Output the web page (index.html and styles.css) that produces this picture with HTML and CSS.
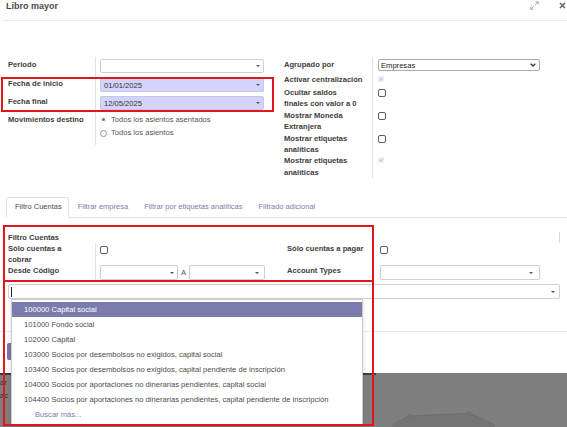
FILE: index.html
```html
<!DOCTYPE html>
<html lang="es">
<head>
    <meta charset="UTF-8">
    <title>Libro mayor</title>
    <link rel="stylesheet" href="styles.css">
</head>
<body>
<div class="page">
    <div class="modal">
        <div class="modal-header">
            <h4 class="modal-title">Libro mayor</h4>
            <div class="header-btns">
                <svg class="icon-expand" width="9" height="9" viewBox="0 0 9 9">
                    <path d="M5.2 3.8 L8.2 0.8 M5.6 0.8 H8.2 V3.4 M3.8 5.2 L0.8 8.2 M0.8 5.6 V8.2 H3.4" fill="none" stroke="#a5a5a5" stroke-width="1"/>
                </svg>
                <svg class="icon-close" width="7" height="7" viewBox="0 0 7 7">
                    <path d="M1 1 L6 6 M6 1 L1 6" stroke="#6e6e6e" stroke-width="1.7"/>
                </svg>
            </div>
        </div>

        <div class="modal-body">
            <div class="form-cols">
                <div class="group group-left">
                    <div class="frow r-first">
                        <div class="lbl">Periodo</div>
                        <div class="fld"><div class="input"><span></span><span class="caret"></span></div></div>
                    </div>
                    <div class="frow">
                        <div class="lbl">Fecha de inicio</div>
                        <div class="fld"><div class="input date"><span>01/01/2025</span><span class="caret"></span></div></div>
                    </div>
                    <div class="frow">
                        <div class="lbl">Fecha final</div>
                        <div class="fld"><div class="input date"><span>12/05/2025</span><span class="caret"></span></div></div>
                    </div>
                    <div class="frow r-radios">
                        <div class="lbl">Movimientos destino</div>
                        <div class="fld">
                            <div class="radio-row"><span class="radio checked"></span>Todos los asientos asentados</div>
                            <div class="radio-row"><span class="radio"></span>Todos los asientos</div>
                        </div>
                    </div>
                </div>

                <div class="group group-right">
                    <div class="frow r-select">
                        <div class="lbl">Agrupado por</div>
                        <div class="fld">
                            <div class="select"><span>Empresas</span>
                                <svg width="6" height="4" viewBox="0 0 6 4"><path d="M0.7 0.8 L3 3 L5.3 0.8" fill="none" stroke="#333" stroke-width="1.3"/></svg>
                            </div>
                        </div>
                    </div>
                    <div class="frow r-single">
                        <div class="lbl nowrap">Activar centralización</div>
                        <div class="fld"><span class="cb-dis"><svg width="4" height="4" viewBox="0 0 4 4"><path d="M0.6 2.2 L1.6 3.1 L3.4 0.9" fill="none" stroke="#9d9dba" stroke-width="0.8"/></svg></span></div>
                    </div>
                    <div class="frow r-double">
                        <div class="lbl">Ocultar saldos finales con valor a 0</div>
                        <div class="fld"><span class="cb"></span></div>
                    </div>
                    <div class="frow r-double">
                        <div class="lbl">Mostrar Moneda Extranjera</div>
                        <div class="fld"><span class="cb"></span></div>
                    </div>
                    <div class="frow r-double">
                        <div class="lbl">Mostrar etiquetas analíticas</div>
                        <div class="fld"><span class="cb"></span></div>
                    </div>
                    <div class="frow r-double">
                        <div class="lbl">Mostrar etiquetas analíticas</div>
                        <div class="fld"><span class="cb-dis"><svg width="4" height="4" viewBox="0 0 4 4"><path d="M0.6 2.2 L1.6 3.1 L3.4 0.9" fill="none" stroke="#9d9dba" stroke-width="0.8"/></svg></span></div>
                    </div>
                </div>
            </div>

            <div class="notebook">
                <ul class="nav-tabs">
                    <li><a class="tab active">Filtro Cuentas</a></li>
                    <li><a class="tab">Filtrar empresa</a></li>
                    <li><a class="tab">Filtrar por etiquetas analíticas</a></li>
                    <li><a class="tab">Filtrado adicional</a></li>
                </ul>
                <div class="tab-pane">
                    <div class="sep-title">Filtro Cuentas</div>
                    <div class="tab-grid">
                        <div class="lbl">Sólo cuentas a cobrar</div>
                        <div class="fld"><span class="cb"></span></div>
                        <div class="lbl">Sólo cuentas a pagar</div>
                        <div class="fld no-line"><span class="cb"></span></div>

                        <div class="lbl">Desde Código</div>
                        <div class="fld code-range">
                            <div class="input small"><span></span><span class="caret"></span></div>
                            <span class="range-a">A</span>
                            <div class="input small b"><span></span><span class="caret"></span></div>
                        </div>
                        <div class="lbl">Account Types</div>
                        <div class="fld no-line"><div class="input types"><span></span><span class="caret"></span></div></div>
                    </div>
                    <div class="input search"><span class="cursor"></span><span class="caret"></span></div>
                </div>
            </div>
        </div>

        <div class="modal-footer">
            <button class="btn-primary"></button>
        </div>
    </div>

    <div class="backdrop">
        <div class="behind-text">
            <div>ar</div>
            <div>ac</div>
        </div>
        <svg class="behind-chart" viewBox="0 0 555 52" width="555" height="52">
            <path d="M379.7 52 L397.3 41 L457.3 38.3 L483 50 L483 52 Z" fill="#747474"/>
            <polyline points="379.7,50 397.3,41 457.3,38.3 483,50" fill="none" stroke="#686868" stroke-width="0.8"/>
            <circle cx="397.3" cy="41" r="1.7" fill="#7a7a7a" stroke="#686868" stroke-width="0.7"/>
            <circle cx="457.3" cy="38.3" r="1.7" fill="#7a7a7a" stroke="#686868" stroke-width="0.7"/>
        </svg>
    </div>

    <ul class="dropdown">
        <li class="item active">100000 Capital social</li>
        <li class="item">101000 Fondo social</li>
        <li class="item">102000 Capital</li>
        <li class="item">103000 Socios por desembolsos no exigidos, capital social</li>
        <li class="item">103400 Socios por desembolsos no exigidos, capital pendiente de inscripción</li>
        <li class="item">104000 Socios por aportaciones no dinerarias pendientes, capital social</li>
        <li class="item">104400 Socios por aportaciones no dinerarias pendientes, capital pendiente de inscripción</li>
        <li class="item more">Buscar más...</li>
    </ul>

    <div class="mark mark-dates"></div>
    <div class="mark mark-filter"></div>
    <div class="mark mark-list"></div>
</div>
</body>
</html>
```

FILE: styles.css
```css
body {
    margin: 0;
    font-family: "Liberation Sans", Arial, sans-serif;
    font-size: 7.6px;
    color: #555;
    background-color: #fff;
}
.page {
    position: relative;
    width: 567px;
    height: 427px;
    overflow: hidden;
}

/* modal */
.modal {
    height: 373px;
    display: flex;
    flex-direction: column;
    background-color: #fff;
}
.modal-header {
    height: 20px;
    margin-left: 3px;
    border-bottom: 1px solid #ececec;
    display: flex;
    justify-content: space-between;
    align-items: flex-start;
}
.modal-title {
    margin: 0;
    padding: 0 0 0 3px;
    font-size: 9px;
    line-height: 12px;
    font-weight: bold;
    color: #4a4a4a;
}
.header-btns {
    display: flex;
    align-items: flex-start;
    gap: 20px;
    padding: 1px 1px 0 0;
}
.icon-close {
    margin-top: 1px;
}
.modal-body {
    flex: 1;
    padding: 36px 7px 0 8px;
}
.modal-footer {
    border-top: 1px solid #e9e9e9;
    padding: 11px 7px 13px;
}
.btn-primary {
    display: block;
    width: 60px;
    height: 17px;
    border: none;
    border-radius: 2px;
    background-color: #7776aa;
}

/* form */
.form-cols {
    display: flex;
    gap: 12px;
}
.group {
    display: flex;
    flex-direction: column;
}
.group-left {
    width: 264px;
}
.group-right {
    width: 260px;
}
.frow {
    display: grid;
    grid-template-columns: 87px 1fr;
}
.group-right .frow {
    grid-template-columns: 88px 1fr;
}
.lbl {
    font-weight: bold;
    color: #3e3e3e;
    line-height: 11.4px;
    padding: 2px 10px 0 0;
}
.nowrap {
    white-space: nowrap;
}
.fld {
    border-left: 1px solid #e3e3e3;
    padding: 2px 0 2px 4px;
}
.group-right .fld {
    padding-left: 5px;
}
.r-first .fld {
    padding-bottom: 3px;
}
.r-radios .fld {
    padding: 1px 0 5px 4px;
}
.r-select .fld {
    padding: 2px 0 2px 5px;
}
.r-single .lbl {
    padding-top: 1px;
}
.r-single .fld {
    height: 14px;
    box-sizing: border-box;
    padding-top: 3px;
}
.r-double .lbl {
    padding-top: 0;
}
.r-double .fld {
    padding-top: 2px;
}

.input {
    box-sizing: border-box;
    width: 164px;
    height: 14px;
    border: 1px solid #cfcfcf;
    border-radius: 2px;
    background-color: #fff;
    display: flex;
    align-items: center;
    justify-content: space-between;
    padding: 0 3px 0 3px;
    color: #333;
}
.input.date {
    background-color: #d3d3fc;
    border-color: #c6c6ee;
}
.caret {
    width: 0;
    height: 0;
    border-left: 2px solid transparent;
    border-right: 2px solid transparent;
    border-top: 2px solid #555;
}
.select {
    box-sizing: border-box;
    width: 162px;
    height: 12px;
    border: 1px solid #ababab;
    border-radius: 2px;
    display: flex;
    align-items: center;
    justify-content: space-between;
    padding: 0 3px 0 2px;
    color: #222;
}
.radio-row {
    display: flex;
    align-items: center;
    gap: 4px;
    line-height: 13.4px;
    color: #555;
}
.radio {
    box-sizing: border-box;
    width: 7px;
    height: 7px;
    border: 1px solid #9a9a9a;
    border-radius: 50%;
    display: flex;
    align-items: center;
    justify-content: center;
}
.radio.checked {
    border-color: #e6e6e6;
}
.radio.checked::after {
    content: "";
    width: 3px;
    height: 3px;
    border-radius: 50%;
    background-color: #777;
}
.cb {
    display: block;
    box-sizing: border-box;
    width: 8px;
    height: 8px;
    border: 1px solid #5e5e5e;
    border-radius: 2px;
}
.cb-dis {
    display: flex;
    align-items: center;
    justify-content: center;
    width: 6px;
    height: 6px;
    border-radius: 1px;
    background-color: #ececf3;
}

/* notebook */
.notebook {
    margin-top: 19px;
}
.nav-tabs {
    list-style: none;
    margin: 0 -7px 0 -2px;
    padding: 0;
    display: flex;
    border-bottom: 1px solid #dee2e6;
}
.tab {
    display: block;
    padding: 3px 6px 4px 8px;
    font-size: 7.5px;
    line-height: 12px;
    border: 1px solid transparent;
    border-radius: 2px 2px 0 0;
    margin-bottom: -1px;
    color: #7c7bad;
}
.tab.active {
    color: #4c4c4c;
    border-color: #dee2e6 #dee2e6 #fff;
    background-color: #fff;
}
.tab-pane {
    padding-top: 14px;
}
.sep-title {
    font-weight: bold;
    color: #3e3e3e;
    line-height: 11px;
    border-right: 1px solid #dcdcdc;
}
.tab-grid {
    display: grid;
    grid-template-columns: 87px 192px 88px 1fr;
}
.tab-grid .lbl {
    line-height: 11px;
    padding-top: 0;
}
.tab-grid .fld {
    padding: 3px 0 0 4px;
}
.tab-grid .fld.no-line {
    border-left: none;
    padding-left: 5px;
}
.tab-grid .code-range {
    display: flex;
    align-items: center;
    padding: 0 0 1px 4px;
}
.input.small {
    width: 78px;
    height: 15px;
    padding-right: 3px;
}
.input.small.b {
    width: 76px;
    padding-right: 5px;
}
.range-a {
    margin: 0 3px;
    color: #555;
}
.tab-grid .fld.no-line:last-child {
    padding-top: 0;
}
.input.types {
    width: 160px;
    height: 15px;
    padding-right: 6px;
}
.input.search {
    width: 552px;
    height: 15px;
    margin-top: 3px;
    padding: 0 4px 0 2px;
}
.cursor {
    width: 1px;
    height: 10px;
    background-color: #222;
}

/* page behind the dialog */
.backdrop {
    height: 54px;
    box-sizing: border-box;
    background-color: #7f7f7f;
    display: flex;
    position: relative;
}
.backdrop::before {
    content: "";
    position: absolute;
    left: 0;
    top: 0;
    width: 376px;
    height: 2px;
    background-color: #3f364f;
}
.behind-text {
    width: 12px;
    padding-top: 3px;
    line-height: 13px;
    color: #2b2b2b;
    overflow: hidden;
}
.behind-chart {
    display: block;
    margin-top: 2px;
}

/* autocomplete list */
.dropdown {
    position: absolute;
    left: 11px;
    top: 299px;
    width: 352px;
    box-sizing: border-box;
    margin: 0;
    padding: 2px 0 2px;
    list-style: none;
    background-color: #fff;
    border: 1px solid #cdcdcd;
    box-shadow: 0 2px 4px rgba(0,0,0,0.15);
    z-index: 5;
}
.item {
    padding-left: 12px;
    line-height: 15px;
    color: #4c4c4c;
    white-space: nowrap;
}
.item.active {
    background-color: #7c7bad;
    color: #fff;
}
.item.more {
    padding-left: 23px;
    color: #7c7bad;
}

/* red annotation boxes */
.mark {
    position: absolute;
    box-sizing: border-box;
    border: 2px solid #e3161b;
    z-index: 10;
}
.mark-dates {
    left: 1px;
    top: 77px;
    width: 273px;
    height: 35px;
}
.mark-filter {
    left: 3px;
    top: 225px;
    width: 371px;
    height: 57px;
}
.mark-list {
    left: 3px;
    top: 280px;
    width: 371px;
    height: 146px;
}
```
